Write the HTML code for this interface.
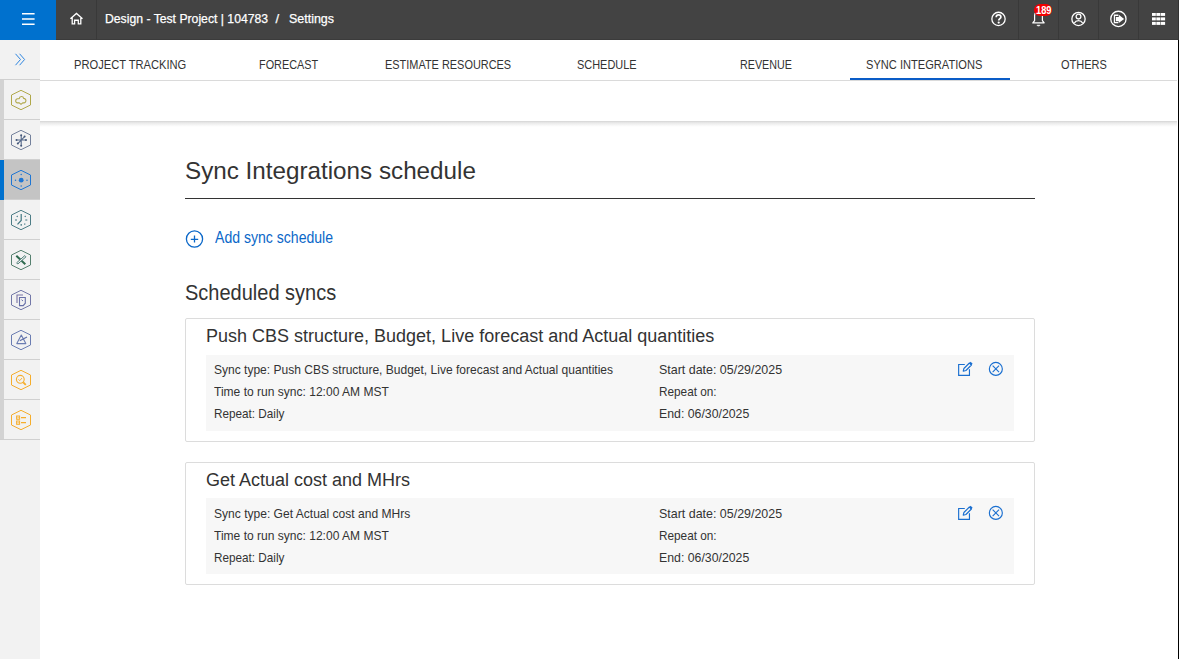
<!DOCTYPE html>
<html><head><meta charset="utf-8">
<style>
*{box-sizing:border-box;margin:0;padding:0}
html,body{width:1179px;height:659px;overflow:hidden;background:#fff;font-family:"Liberation Sans",sans-serif;color:#333}
.abs{position:absolute}
.tx{position:absolute;white-space:pre;transform-origin:0 0;line-height:1}
#top{position:absolute;left:0;top:0;width:1179px;height:40px;background:#434343;border-bottom:1px solid #3b3b3b}
#burger{position:absolute;left:0;top:0;width:56px;height:40px;background:#0071ce}
#burger i{position:absolute;left:22px;width:13px;height:2px;background:#fff}
.sep{position:absolute;top:0;width:1px;height:40px;background:#393939}
#side{position:absolute;left:0;top:40px;width:40px;height:619px;background:#f2f2f2}
.strip{position:absolute;left:0;top:40px;width:4px;height:360px;background:#d3d3d3}
.hl{position:absolute;left:0;width:40px;height:1px;background:#d0d0d0}
#tabs{position:absolute;left:40px;top:40px;width:1137px;height:81px;background:#fff}
.tab{font-size:13px;color:#333;top:18px}
#tabline{position:absolute;left:0;top:40px;width:1137px;height:1px;background:#dadada}
#ul{position:absolute;left:810px;top:38px;width:160px;height:2px;background:#0a5cc7}
#shadow{position:absolute;left:40px;top:121px;width:1137px;height:6px;background:linear-gradient(#d4d4d4,#e9e9e9 30%,#fafafa 80%,#fff)}
#rline{position:absolute;left:1178px;top:40px;width:1px;height:619px;background:#000}
#rtop{position:absolute;left:1178px;top:0;width:1px;height:40px;background:#333}
#hr{position:absolute;left:185px;top:198px;width:850px;height:1px;background:#333}
.card{position:absolute;left:185px;width:850px;border:1px solid #dcdcdc;border-radius:2px}
.box{position:absolute;left:20px;width:808px;height:76px;background:#f7f7f7}
.ln{font-size:13px;color:#333}
.crumb{top:12px;font-size:13px;color:#fff;-webkit-text-stroke:0.25px #fff}
</style></head><body>
<div id="top">
  <div id="burger"><svg class="abs" style="left:0;top:0" width="56" height="40"><path d="M22 13.66 H34.6 M22 18.96 H34.6 M22 24.3 H34.6" stroke="#fff" stroke-width="1.45"/></svg></div>
  <div class="sep" style="left:96px"></div>
  <svg class="abs" style="left:69px;top:12px" width="15" height="14" viewBox="0 0 15 14"><path d="M1.4 6.7 L7.45 1.4 L13.5 6.7 M3.2 5.1 V11.85 H5.6 V8.25 H9.3 V11.85 H11.8 V5.1" fill="none" stroke="#fff" stroke-width="1.3" stroke-linejoin="miter"/></svg>
  <div class="tx crumb" style="left:105px;transform:scaleX(0.939)">Design - Test Project | 104783</div>
  <div class="tx crumb" style="left:275.5px">/</div>
  <div class="tx crumb" style="left:288.5px;transform:scaleX(0.958)">Settings</div>
  <!-- help -->
  <svg class="abs" style="left:990px;top:11px" width="17" height="17" viewBox="0 0 17 17"><circle cx="8.5" cy="7.9" r="6.65" fill="none" stroke="#fff" stroke-width="1.3"/><path d="M6.2 6.2 C6.2 4.6 7.3 3.9 8.6 3.9 C10 3.9 10.9 4.8 10.9 6 C10.9 7.6 8.7 7.8 8.7 9.6" fill="none" stroke="#fff" stroke-width="1.7"/><circle cx="8.7" cy="11.6" r="1.1" fill="#fff"/></svg>
  <div class="sep" style="left:1018px"></div>
  <!-- bell -->
  <svg class="abs" style="left:1031px;top:10px" width="16" height="18" viewBox="0 0 16 18"><path d="M3.6 10.6 V5.5 C3.6 3.3 5.3 1.8 7.5 1.8 C9.7 1.8 11.4 3.3 11.4 5.5 V10.6 L13.2 12.9 H1.8 Z" fill="none" stroke="#fff" stroke-width="1.2" stroke-linejoin="round"/><path d="M5.9 15.2 C6.2 16.3 8.8 16.3 9.1 15.2 Z" fill="#fff" stroke="#fff" stroke-width="0.6"/></svg>
  <div class="abs" style="left:1034px;top:4px;width:18px;height:12px;background:#f20000;border-radius:6px"></div>
  <div class="tx" style="left:1035.5px;top:5.7px;font-size:10.3px;font-weight:bold;color:#fff;transform:scaleX(0.9)">189</div>
  <div class="sep" style="left:1058px"></div>
  <!-- user -->
  <svg class="abs" style="left:1070px;top:11px" width="17" height="17" viewBox="0 0 17 17"><circle cx="8.5" cy="7.95" r="6.65" fill="none" stroke="#fff" stroke-width="1.3"/><circle cx="8.5" cy="5.6" r="2.4" fill="none" stroke="#fff" stroke-width="1.3"/><path d="M4.2 12.3 C5.2 10.5 6.8 9.7 8.5 9.7 C10.2 9.7 11.8 10.5 12.8 12.3" fill="none" stroke="#fff" stroke-width="1.3"/></svg>
  <div class="sep" style="left:1098px"></div>
  <!-- logout -->
  <svg class="abs" style="left:1109px;top:10px" width="19" height="19" viewBox="0 0 19 19"><circle cx="9.4" cy="8.9" r="7.65" fill="none" stroke="#fff" stroke-width="1.3"/><path d="M9.3 5.25 H5.45 V12.65 H9.3" fill="none" stroke="#fff" stroke-width="1.3"/><path d="M6.9 6.9 H9.8 V4.8 L15.1 8.9 L9.8 13 V11.2 H6.9 Z" fill="#fff"/></svg>
  <div class="sep" style="left:1138px"></div>
  <!-- grid -->
  <svg class="abs" style="left:1152px;top:13px" width="14" height="13" viewBox="0 0 14 13" fill="#fff"><rect x="-0.30" y="-0.10" width="4.1" height="3"/><rect x="4.35" y="-0.10" width="4.1" height="3"/><rect x="9.00" y="-0.10" width="4.1" height="3"/><rect x="-0.30" y="4.40" width="4.1" height="3"/><rect x="4.35" y="4.40" width="4.1" height="3"/><rect x="9.00" y="4.40" width="4.1" height="3"/><rect x="-0.30" y="8.90" width="4.1" height="3"/><rect x="4.35" y="8.90" width="4.1" height="3"/><rect x="9.00" y="8.90" width="4.1" height="3"/></svg>
  <div id="rtop"></div>
</div>

<div id="side">
  <div class="strip"></div>
  <div class="abs" style="left:0;top:120px;width:40px;height:40px;background:#c4c4c4"></div>
  <div class="abs" style="left:0;top:120px;width:4px;height:40px;background:#0071ce"></div>
  <div class="hl" style="top:39px"></div>
  <div class="hl" style="top:79px;left:4px;width:36px"></div><div class="hl" style="top:119px;left:4px;width:36px"></div><div class="hl" style="top:159px;left:4px;width:36px"></div><div class="hl" style="top:199px;left:4px;width:36px"></div><div class="hl" style="top:239px;left:4px;width:36px"></div><div class="hl" style="top:279px;left:4px;width:36px"></div><div class="hl" style="top:319px;left:4px;width:36px"></div><div class="hl" style="top:359px;left:4px;width:36px"></div>
  <div class="hl" style="top:399px"></div>
</div>
<svg class="abs" style="left:0;top:0" width="40" height="659" viewBox="0 0 40 659"><path d="M21 90.30 L30.50 95.00 L30.50 105.00 L21 109.70 L11.50 105.00 L11.50 95.00 Z" fill="none" stroke="#b0a84a" stroke-width="1" stroke-linejoin="round"/><path d="M21 130.30 L30.50 135.00 L30.50 145.00 L21 149.70 L11.50 145.00 L11.50 135.00 Z" fill="none" stroke="#74819c" stroke-width="1" stroke-linejoin="round"/><path d="M21 170.30 L30.50 175.00 L30.50 185.00 L21 189.70 L11.50 185.00 L11.50 175.00 Z" fill="none" stroke="#1f76d3" stroke-width="1" stroke-linejoin="round"/><path d="M21 210.30 L30.50 215.00 L30.50 225.00 L21 229.70 L11.50 225.00 L11.50 215.00 Z" fill="none" stroke="#4d7d86" stroke-width="1" stroke-linejoin="round"/><path d="M21 250.30 L30.50 255.00 L30.50 265.00 L21 269.70 L11.50 265.00 L11.50 255.00 Z" fill="none" stroke="#56806f" stroke-width="1" stroke-linejoin="round"/><path d="M21 290.30 L30.50 295.00 L30.50 305.00 L21 309.70 L11.50 305.00 L11.50 295.00 Z" fill="none" stroke="#7378a8" stroke-width="1" stroke-linejoin="round"/><path d="M21 330.30 L30.50 335.00 L30.50 345.00 L21 349.70 L11.50 345.00 L11.50 335.00 Z" fill="none" stroke="#6b7db2" stroke-width="1" stroke-linejoin="round"/><path d="M21 370.30 L30.50 375.00 L30.50 385.00 L21 389.70 L11.50 385.00 L11.50 375.00 Z" fill="none" stroke="#f5ad2c" stroke-width="1" stroke-linejoin="round"/><path d="M21 410.30 L30.50 415.00 L30.50 425.00 L21 429.70 L11.50 425.00 L11.50 415.00 Z" fill="none" stroke="#f5ad2c" stroke-width="1" stroke-linejoin="round"/><path d="M21 104.3 L19.3 102.9 L17.4 102.9 C15.1 102.9 15.1 98.7 17.6 98.7 L19.2 98.7 C19.5 95.8 23.2 95.8 23.6 98.4 C26.7 98.3 26.6 102.9 23.8 102.9 L22.7 102.9 Z" fill="none" stroke="#b0a84a" stroke-width="1.1" stroke-linejoin="round"/><path d="M21.2 135 V146 M17.8 143.6 L24.6 136.6 M16.5 140 H26" fill="none" stroke="#55698a" stroke-width="1.1"/><circle cx="16.5" cy="140" r="1" fill="#44577a"/><circle cx="26" cy="140" r="1" fill="#44577a"/><circle cx="24.6" cy="136.6" r="1" fill="#44577a"/><circle cx="17.8" cy="143.6" r="1" fill="#44577a"/><circle cx="21.2" cy="135.2" r="1" fill="#44577a"/><circle cx="21.2" cy="145.8" r="1" fill="#44577a"/><circle cx="21.2" cy="180.2" r="2.4" fill="#1f76d3"/><circle cx="21.2" cy="174.5" r="0.75" fill="#1f76d3"/><circle cx="21.2" cy="186" r="0.75" fill="#1f76d3"/><circle cx="15.5" cy="180.2" r="0.75" fill="#1f76d3"/><circle cx="27" cy="180.2" r="0.75" fill="#1f76d3"/><path d="M21.2 214 V220.5 L17.5 224.3 M15 220 H17 M25.3 220 H27.3 M16.8 216 L17.6 216.8 M25.6 216 L24.8 216.8 M21.2 224 V225.8 M24.4 223.7 L25.2 224.5" fill="none" stroke="#3f7680" stroke-width="1.2"/><path d="M16.3 255.8 L25.3 264.2" stroke="#2e6a4e" stroke-width="2"/><path d="M16.6 262.8 L24.8 255.6 L26 256.8 L17.8 264 Z" fill="#f2f2f2" stroke="#4f7f78" stroke-width="1"/><path d="M17 303 V295 H23" fill="none" stroke="#7a74a6" stroke-width="1.1"/><path d="M19.5 297.5 H25.3 V303.2 L23.2 305.6 H19.5 Z" fill="none" stroke="#6870a8" stroke-width="1.1"/><path d="M21.5 299.7 L23 301" stroke="#6870a8" stroke-width="1"/><path d="M21.3 335 L16.8 343.6 H25.8 Z" fill="none" stroke="#6b7db2" stroke-width="1.1" stroke-linejoin="round"/><path d="M19.8 340.8 L27 337" stroke="#5d6ea8" stroke-width="1.1"/><circle cx="20.3" cy="379.3" r="3.9" fill="none" stroke="#f5ad2c" stroke-width="1.1"/><path d="M23.2 382.3 L25.8 384.9" stroke="#f5ad2c" stroke-width="1.8"/><path d="M18.4 379.4 L19.8 380.6 L22 378" fill="none" stroke="#f5ad2c" stroke-width="0.9"/><rect x="16.6" y="416" width="3" height="3.3" fill="none" stroke="#f5ad2c" stroke-width="1"/><rect x="16.6" y="421" width="3" height="3.3" fill="none" stroke="#f5ad2c" stroke-width="1"/><path d="M17.3 416.8 L18.9 418.5 M18.9 416.8 L17.3 418.5 M17.3 421.8 L18.9 423.5 M18.9 421.8 L17.3 423.5" stroke="#f7c060" stroke-width="0.8"/><path d="M21 417.6 H26 M21 422.6 H26" stroke="#f5ad2c" stroke-width="1.1"/><path d="M15.5 53.8 L20.5 59.5 L15.5 65.2 M19.6 53.8 L24.6 59.5 L19.6 65.2" fill="none" stroke="#2f86e0" stroke-width="1"/></svg>

<div id="tabs">
  <div id="tabline"></div>
  <div id="ul"></div>
  <div class="tx tab" style="left:34px;transform:scaleX(0.857)">PROJECT TRACKING</div>
  <div class="tx tab" style="left:219px;transform:scaleX(0.835)">FORECAST</div>
  <div class="tx tab" style="left:345px;transform:scaleX(0.841)">ESTIMATE RESOURCES</div>
  <div class="tx tab" style="left:537px;transform:scaleX(0.842)">SCHEDULE</div>
  <div class="tx tab" style="left:700px;transform:scaleX(0.824)">REVENUE</div>
  <div class="tx tab" style="left:826px;transform:scaleX(0.854)">SYNC INTEGRATIONS</div>
  <div class="tx tab" style="left:1021px;transform:scaleX(0.846)">OTHERS</div>
</div>
<div id="shadow"></div>
<div id="rline"></div>

<div class="tx" style="left:185px;top:159px;font-size:24.6px;color:#333;transform:scaleX(0.985)">Sync Integrations schedule</div>
<div id="hr"></div>
<svg class="abs" style="left:185px;top:230px" width="19" height="19" viewBox="0 0 19 19"><circle cx="9.5" cy="9" r="8.1" fill="none" stroke="#0a67c8" stroke-width="1.3"/><path d="M9.5 5.6V12.6M5.8 9.3H13.2" stroke="#0a67c8" stroke-width="1.3"/></svg>
<div class="tx" style="left:215px;top:229px;font-size:16.4px;color:#0a67c8;transform:scaleX(0.858)">Add sync schedule</div>
<div class="tx" style="left:185px;top:283px;font-size:21.4px;color:#333;transform:scaleX(0.935)">Scheduled syncs</div>

<div class="card" style="top:318px;height:124px">
  <div class="tx" style="left:20px;top:8px;font-size:18px;color:#333">Push CBS structure, Budget, Live forecast and Actual quantities</div>
  <div class="box" style="top:36px"></div>
</div>
<div class="card" style="top:462px;height:123px">
  <div class="tx" style="left:20px;top:8px;font-size:18px;color:#333">Get Actual cost and MHrs</div>
  <div class="box" style="top:35px"></div>
</div>

<div class="tx ln" style="left:214px;top:363px;transform:scaleX(0.925)">Sync type: Push CBS structure, Budget, Live forecast and Actual quantities</div>
<div class="tx ln" style="left:214px;top:385px;transform:scaleX(0.926)">Time to run sync: 12:00 AM MST</div>
<div class="tx ln" style="left:214px;top:407px;transform:scaleX(0.902)">Repeat: Daily</div>
<div class="tx ln" style="left:659px;top:363px;transform:scaleX(0.957)">Start date: 05/29/2025</div>
<div class="tx ln" style="left:659px;top:385px;transform:scaleX(0.906)">Repeat on:</div>
<div class="tx ln" style="left:659px;top:407px;transform:scaleX(0.946)">End: 06/30/2025</div>

<div class="tx ln" style="left:214px;top:507px;transform:scaleX(0.927)">Sync type: Get Actual cost and MHrs</div>
<div class="tx ln" style="left:214px;top:529px;transform:scaleX(0.926)">Time to run sync: 12:00 AM MST</div>
<div class="tx ln" style="left:214px;top:551px;transform:scaleX(0.902)">Repeat: Daily</div>
<div class="tx ln" style="left:659px;top:507px;transform:scaleX(0.957)">Start date: 05/29/2025</div>
<div class="tx ln" style="left:659px;top:529px;transform:scaleX(0.906)">Repeat on:</div>
<div class="tx ln" style="left:659px;top:551px;transform:scaleX(0.946)">End: 06/30/2025</div>

<!-- edit / delete icons -->
<svg class="abs" style="left:957px;top:361px" width="17" height="16" viewBox="0 0 17 16"><path d="M7.8 3.45 H1.65 V14.35 H12.45 V8.25" fill="none" stroke="#1a6fd0" stroke-width="1.15"/><path d="M6.2 10.2 L6.9 7.5 L12.4 2 L14.4 4 L8.9 9.5 Z" fill="none" stroke="#1a6fd0" stroke-width="1.1" stroke-linejoin="round"/><path d="M12.2 2.2 L13.6 0.8 L15.6 2.8 L14.2 4.2 Z" fill="#1a6fd0"/></svg>
<svg class="abs" style="left:987px;top:361px" width="17" height="16" viewBox="0 0 17 16"><circle cx="8.85" cy="7.9" r="6.5" fill="none" stroke="#1a6fd0" stroke-width="1.15"/><path d="M5.65 4.7 L12.05 11.1 M12.05 4.7 L5.65 11.1" stroke="#1a6fd0" stroke-width="1.1"/></svg>
<svg class="abs" style="left:957px;top:505px" width="17" height="16" viewBox="0 0 17 16"><path d="M7.8 3.45 H1.65 V14.35 H12.45 V8.25" fill="none" stroke="#1a6fd0" stroke-width="1.15"/><path d="M6.2 10.2 L6.9 7.5 L12.4 2 L14.4 4 L8.9 9.5 Z" fill="none" stroke="#1a6fd0" stroke-width="1.1" stroke-linejoin="round"/><path d="M12.2 2.2 L13.6 0.8 L15.6 2.8 L14.2 4.2 Z" fill="#1a6fd0"/></svg>
<svg class="abs" style="left:987px;top:505px" width="17" height="16" viewBox="0 0 17 16"><circle cx="8.85" cy="7.9" r="6.5" fill="none" stroke="#1a6fd0" stroke-width="1.15"/><path d="M5.65 4.7 L12.05 11.1 M12.05 4.7 L5.65 11.1" stroke="#1a6fd0" stroke-width="1.1"/></svg>
</body></html>
